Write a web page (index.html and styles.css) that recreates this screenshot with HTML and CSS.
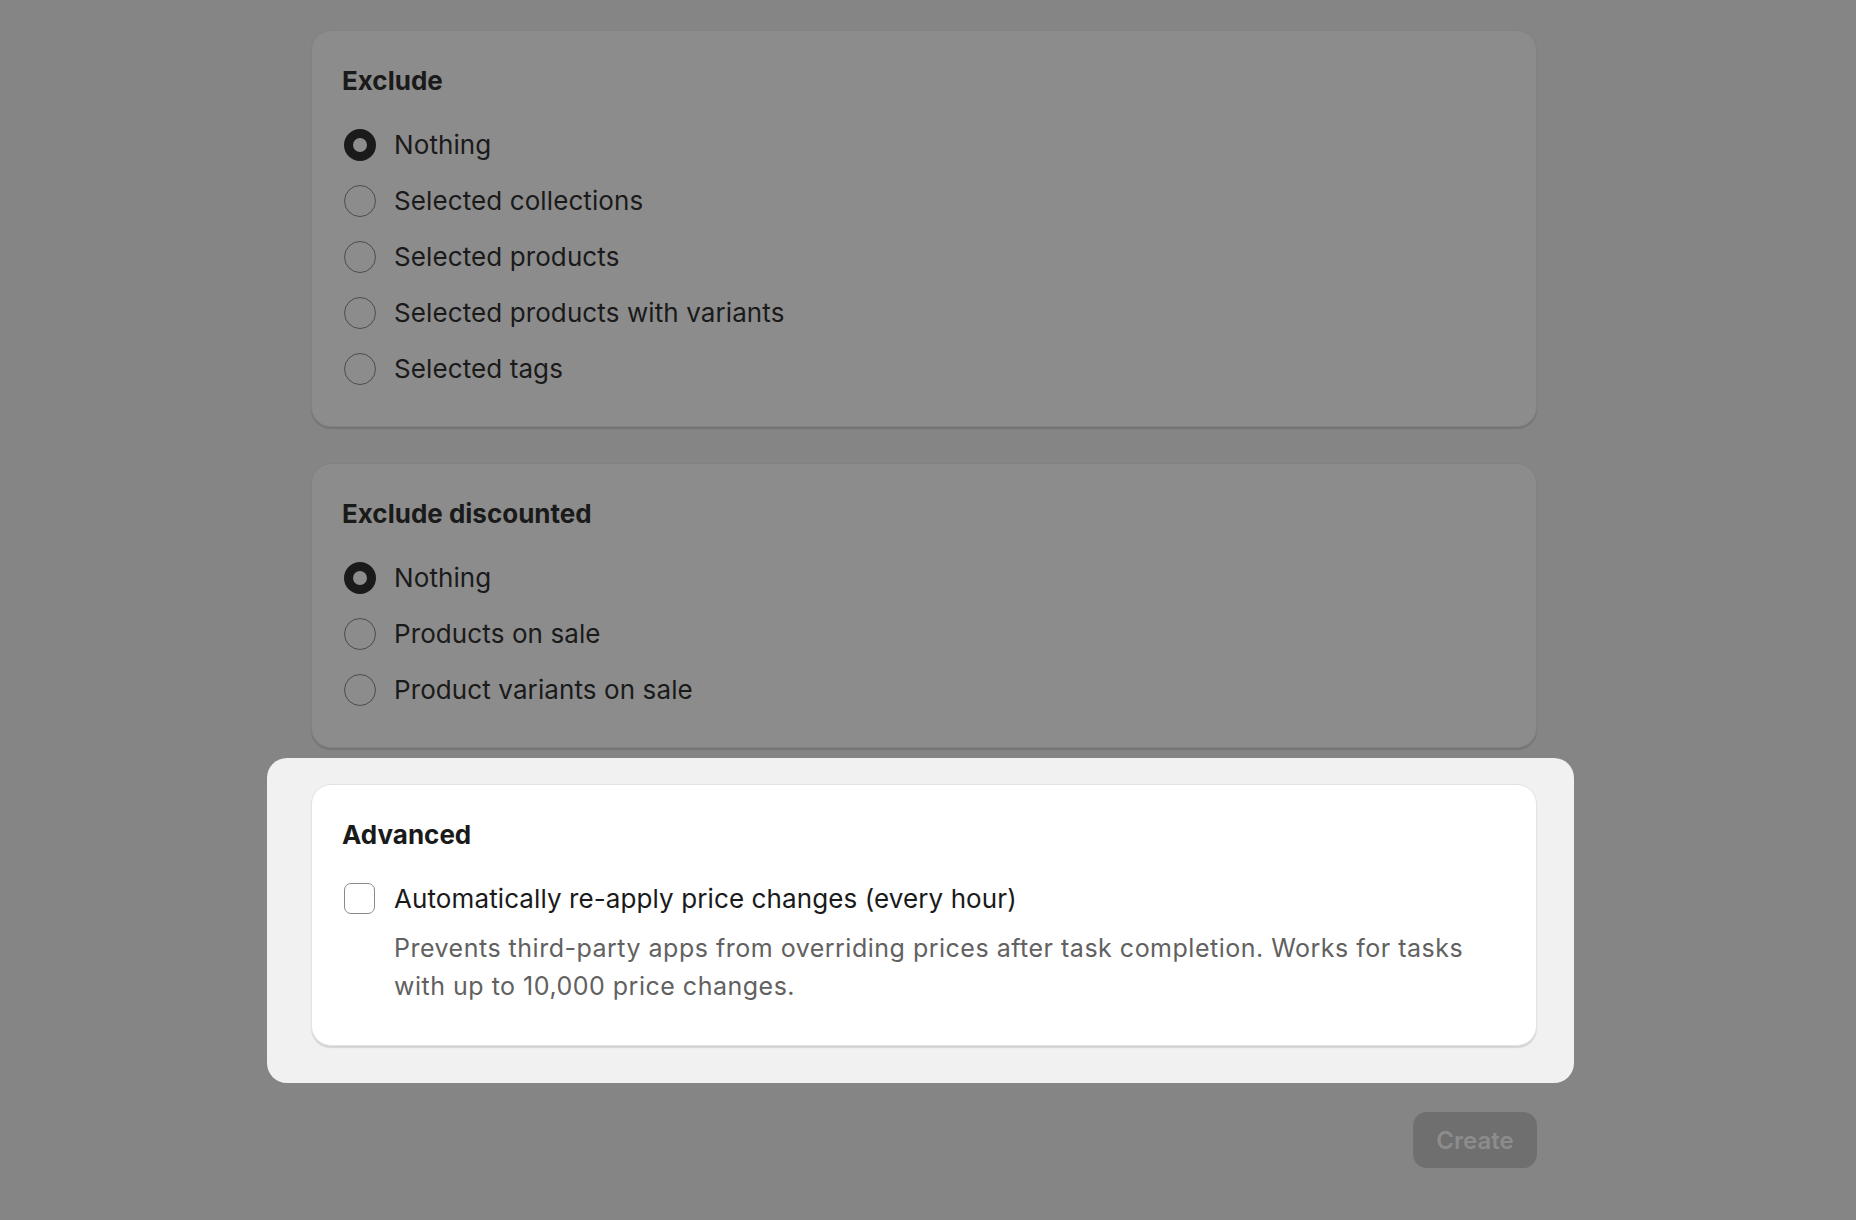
FILE: index.html
```html
<!DOCTYPE html>
<html lang="en">
<head>
<meta charset="utf-8">
<title>Task settings</title>
<link rel="stylesheet" href="styles.css">
</head>
<body>
<main class="page">
  <section class="card card-dim">
    <h2 class="card-title">Exclude</h2>
    <ul class="choices">
      <li class="choice"><span class="radio radio-on"></span><span class="choice-label">Nothing</span></li>
      <li class="choice"><span class="radio"></span><span class="choice-label">Selected collections</span></li>
      <li class="choice"><span class="radio"></span><span class="choice-label">Selected products</span></li>
      <li class="choice"><span class="radio"></span><span class="choice-label">Selected products with variants</span></li>
      <li class="choice"><span class="radio"></span><span class="choice-label">Selected tags</span></li>
    </ul>
  </section>

  <section class="card card-dim">
    <h2 class="card-title">Exclude discounted</h2>
    <ul class="choices">
      <li class="choice"><span class="radio radio-on"></span><span class="choice-label">Nothing</span></li>
      <li class="choice"><span class="radio"></span><span class="choice-label">Products on sale</span></li>
      <li class="choice"><span class="radio"></span><span class="choice-label">Product variants on sale</span></li>
    </ul>
  </section>

  <div class="spotlight">
    <section class="card card-lit">
      <h2 class="card-title">Advanced</h2>
      <div class="check-row">
        <span class="checkbox"></span>
        <div class="check-text">
          <div class="choice-label">Automatically re-apply price changes (every hour)</div>
          <p class="help">Prevents third-party apps from overriding prices after task completion. Works for tasks with up to 10,000 price changes.</p>
        </div>
      </div>
    </section>
  </div>

  <div class="actions">
    <button class="btn-create" type="button" disabled>Create</button>
  </div>
</main>
</body>
</html>
```

FILE: styles.css
```css
* { box-sizing: border-box; }

html, body {
  margin: 0;
  padding: 0;
  background: #858585;
  height: 100%;
}

body {
  font-family: Inter, "Noto Sans", "Liberation Sans", sans-serif;
  color: #1a1a1a;
  overflow: hidden;
}

.page {
  width: 1226px;
  margin-left: 311px;
  padding-top: 30px;
  display: flex;
  flex-direction: column;
  gap: 36px;
}

.card {
  border-radius: 20px;
  padding: 34px 32px 29px 29px;
  border: 1px solid rgba(0, 0, 0, 0.07);
  box-shadow: 0 2px 1px rgba(0, 0, 0, 0.13);
}

.card-dim {
  background: #8c8c8c;
}

.card-lit {
  position: relative;
  background: #ffffff;
  border-color: #e3e3e3;
  box-shadow: 0 2px 1px rgba(0, 0, 0, 0.12);
  padding-top: 34px;
  padding-bottom: 40px;
}

.card-title {
  margin: 0 0 20px 1px;
  font-size: 26px;
  line-height: 32px;
  font-weight: 700;
  letter-spacing: 0;
}

.choices {
  list-style: none;
  margin: 0;
  padding: 0;
}

.choice {
  display: flex;
  align-items: center;
  height: 56px;
}

.radio {
  flex: none;
  width: 32px;
  height: 32px;
  margin-left: 3px;
  margin-right: 18px;
  border-radius: 50%;
  border: 1.5px solid #4c4c4c;
}

.radio-on {
  border: 9.5px solid #1a1a1a;
}

.choice-label {
  font-size: 26px;
  line-height: 56px;
  font-weight: 400;
  letter-spacing: 0.1px;
}

.spotlight {
  position: relative;
}

.spotlight::before {
  content: "";
  position: absolute;
  top: -26px;
  bottom: -37px;
  left: -44px;
  right: -37px;
  background: #f1f1f1;
  border-radius: 20px;
}

.check-row {
  display: flex;
  align-items: flex-start;
}

.checkbox {
  flex: none;
  width: 31px;
  height: 31px;
  margin: 12px 19px 0 3px;
  border: 1.5px solid #8a8a8a;
  border-radius: 7px;
  background: #ffffff;
}

.check-text {
  display: flex;
  flex-direction: column;
}

.help {
  margin: 2px 0 0;
  font-size: 25px;
  line-height: 38px;
  letter-spacing: 0.5px;
  color: #616161;
}

.actions {
  display: flex;
  justify-content: flex-end;
  margin-top: 30px;
}

.btn-create {
  width: 124px;
  height: 56px;
  border: none;
  border-radius: 14px;
  background: #6f6f6f;
  color: #8c8c8c;
  font-family: Inter, "Noto Sans", "Liberation Sans", sans-serif;
  font-size: 24px;
  font-weight: 600;
  padding: 0;
}
```
